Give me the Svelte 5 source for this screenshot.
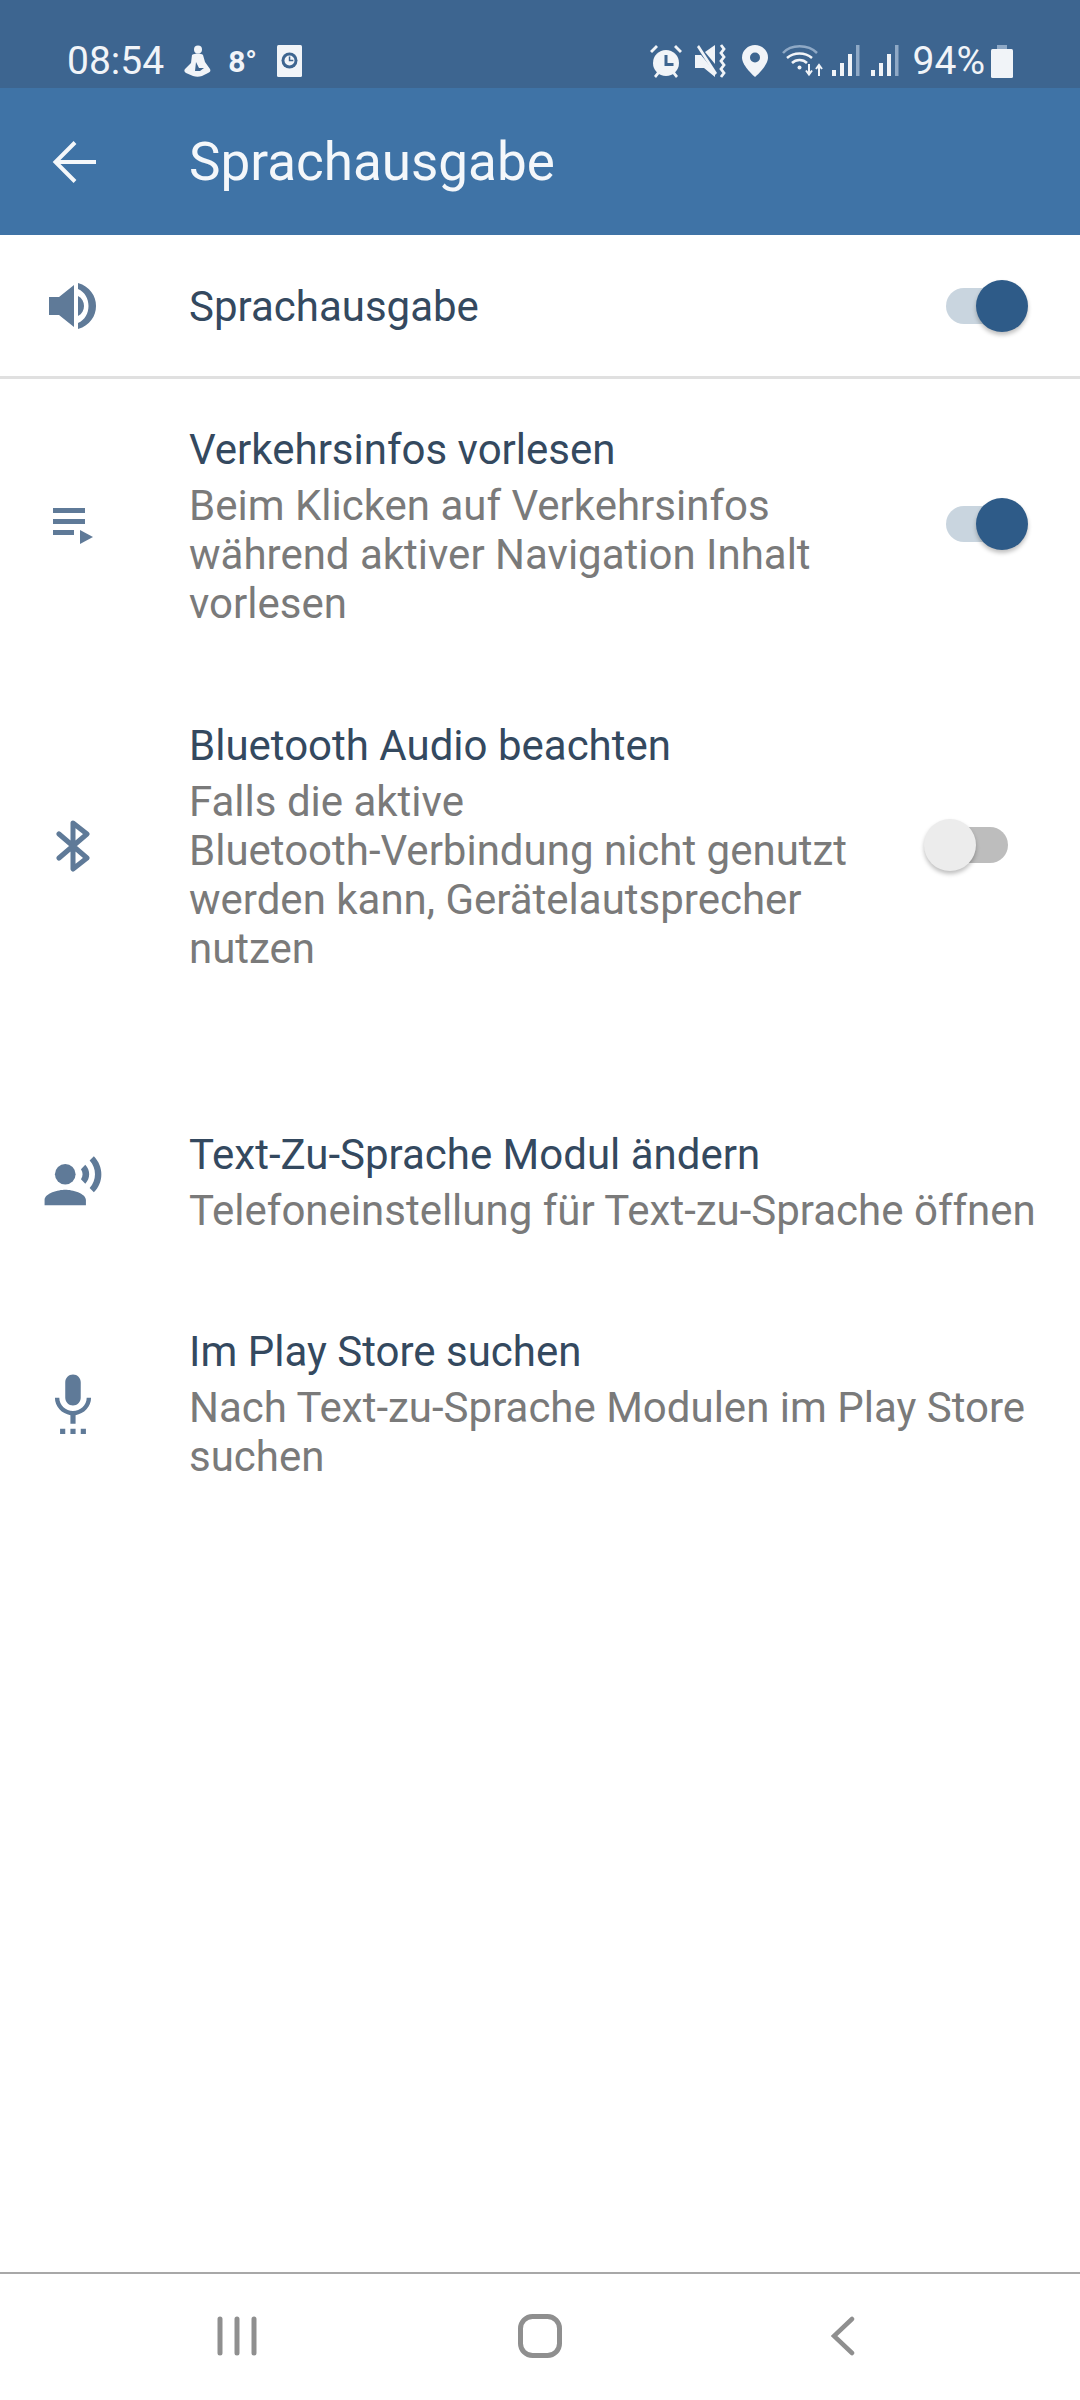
<script>
  const rows = [
    {
      id: 'traffic',
      title: 'Verkehrsinfos vorlesen',
      lines: ['Beim Klicken auf Verkehrsinfos', 'während aktiver Navigation Inhalt', 'vorlesen'],
      toggle: true
    },
    {
      id: 'bluetooth',
      title: 'Bluetooth Audio beachten',
      lines: ['Falls die aktive', 'Bluetooth-Verbindung nicht genutzt', 'werden kann, Gerätelautsprecher', 'nutzen'],
      toggle: false
    },
    {
      id: 'tts',
      title: 'Text-Zu-Sprache Modul ändern',
      lines: ['Telefoneinstellung für Text-zu-Sprache öffnen']
    },
    {
      id: 'store',
      title: 'Im Play Store suchen',
      lines: ['Nach Text-zu-Sprache Modulen im Play Store', 'suchen']
    }
  ];
</script>

<div class="screen">
  <div class="status">
    <div class="status-left">
      <span class="time">08:54</span>
      <svg class="st-figure" viewBox="0 0 27 32" fill="#f1f4f8">
        <circle cx="14" cy="4.500" r="4" />
        <path d="M8 10c3-2 9-2 11 0l2 7 5 7c1 2 0 3-2 4l-6 3c-3 1-6 1-9 0l-7-3c-2-1-2-3-1-4l6-6z" />
        <path d="M12 17l3 6 5 0-4 3h-5z" fill="#3d6590" />
      </svg>
      <span class="deg">8°</span>
      <svg class="st-card" viewBox="0 0 25 32">
        <rect width="25" height="32" rx="1.500" fill="#f1f4f8" />
        <circle cx="12.500" cy="15.500" r="8" fill="#3d6590" />
        <circle cx="12.500" cy="15.500" r="5" fill="#f1f4f8" />
        <path d="M11.800 11.500h1.500v3.200h3v1.500h-4.500z" fill="#3d6590" />
      </svg>
    </div>
    <div class="status-right">
      <svg class="st-alarm" viewBox="0 0 34 34" fill="#f1f4f8">
        <path d="M17 6a13 13 0 1 0 0 26 13 13 0 0 0 0-26z" />
        <path d="M1 7l6-6 2 2-6 6zM33 7l-6-6-2 2 6 6z" />
        <path d="M5 32l4-5 2 2-4 5zM29 32l-4-5-2 2 4 5z" />
        <path d="M15.500 11h3v8h6v3h-9z" fill="#3d6590" />
      </svg>
      <svg class="st-mute" viewBox="0 0 32 34" fill="#f1f4f8">
        <path d="M0 11h6l14 17v5L9 24H0z" />
        <path d="M10 8l10-7v19z" />
        <path d="M2 3l2-2 18 28-2 2z" />
        <path d="M26 1l3 4-3 4 3 4-3 4 3 4-3 4 3 4-3 4" fill="none" stroke="#f1f4f8" stroke-width="2.800" />
      </svg>
      <svg class="st-pin" viewBox="0 0 26 32">
        <path d="M13 0C6 0 0 5.500 0 12.500 0 21 13 32 13 32s13-11 13-19.500C26 5.500 20 0 13 0z" fill="#f1f4f8" />
        <circle cx="13" cy="12.500" r="5" fill="#3d6590" />
      </svg>
      <svg class="st-wifi" viewBox="0 0 42 34" fill="none" stroke="#f1f4f8" stroke-width="2.500">
        <path d="M1 9C9 0 26 0 35 9" stroke="#8fa9c6" />
        <path d="M5 14c7-6 18-6 25 0" />
        <path d="M10 19c4-4 11-4 15 0" />
        <circle cx="17.500" cy="23.500" r="2" fill="#f1f4f8" stroke="none" />
        <path d="M27 20v10M24 26.500l3 4 3-4M37 32V22M34 25l3-4 3 4" stroke-width="2" />
      </svg>
      <svg class="st-signal" viewBox="0 0 28 32" fill="#f1f4f8">
        <rect x="0" y="25" width="4" height="6" />
        <rect x="8" y="18" width="4" height="13" />
        <rect x="16" y="9" width="4" height="22" />
        <rect x="24" y="0" width="3.500" height="31" fill="#8fa9c6" />
      </svg>
      <svg class="st-signal second" viewBox="0 0 28 32" fill="#f1f4f8">
        <rect x="0" y="25" width="4" height="6" />
        <rect x="8" y="18" width="4" height="13" />
        <rect x="16" y="9" width="4" height="22" />
        <rect x="24" y="0" width="3.500" height="31" fill="#8fa9c6" />
      </svg>
      <span class="pct">94%</span>
      <svg class="st-battery" viewBox="0 0 22 33">
        <rect x="6" y="0" width="10" height="4" fill="#8fa9c6" />
        <rect x="0" y="4" width="22" height="29" rx="1.500" fill="#f1f4f8" />
      </svg>
    </div>
  </div>

  <header class="appbar">
    <svg class="back" viewBox="0 0 44 44" fill="none" stroke="#f4f7fa" stroke-width="4">
      <path d="M44 22H4M23 2.500L3.500 22 23 41.500" />
    </svg>
    <h1>Sprachausgabe</h1>
  </header>

  <section class="master">
    <div class="icon-col">
      <svg class="ic-volume" viewBox="0 0 48 48" fill="#5f7a98">
        <path d="M0 15h10L25 3v42L10 33H0z" />
        <path d="M29 14C37 18 37 30 29 34z" />
        <path d="M29 1C53 8 53 40 29 47v-6C43 35 43 13 29 7z" />
      </svg>
    </div>
    <span class="title">Sprachausgabe</span>
    <div class="switch on"><span class="track"></span><span class="thumb"></span></div>
  </section>

  <div class="list">
    {#each rows as row}
      <div class="row {row.id}">
        <div class="icon-col">
          {#if row.id === 'traffic'}
            <svg class="ic-playlist" viewBox="0 0 40 36" fill="#5f7a98">
              <rect x="0" y="0" width="32" height="5" />
              <rect x="0" y="11" width="32" height="5" />
              <rect x="0" y="22" width="21" height="5" />
              <path d="M27 22l13 7-13 7z" />
            </svg>
          {:else if row.id === 'bluetooth'}
            <svg class="ic-bluetooth" viewBox="0 0 34 52" fill="none" stroke="#5f7a98" stroke-width="5" stroke-linecap="round" stroke-linejoin="round">
              <path d="M3 14l28 24-14 11V3l14 11L3 38" />
            </svg>
          {:else if row.id === 'tts'}
            <svg class="ic-voice" viewBox="0 0 24 24" fill="#5f7a98">
              <circle cx="9" cy="9" r="4" />
              <path d="M9 15c-2.670 0-8 1.340-8 4v2h16v-2c0-2.660-5.330-4-8-4zm7.760-9.640l-1.680 1.690c.840 1.180.840 2.710 0 3.890l1.680 1.690c2.020-2.020 2.020-5.070 0-7.270zM20.070 2l-1.630 1.630c2.770 3.020 2.770 7.560 0 10.740L20.070 16c3.900-3.890 3.910-9.950 0-14z" />
            </svg>
          {:else}
            <svg class="ic-mic" viewBox="0 0 24 24" fill="#5f7a98">
              <path d="M7 24h2v-2H7v2zm5-11c1.660 0 2.990-1.340 2.990-3L15 4c0-1.660-1.340-3-3-3S9 2.340 9 4v6c0 1.660 1.340 3 3 3zm-1 11h2v-2h-2v2zm4 0h2v-2h-2v2zm4-14h-1.700c0 3-2.540 5.100-5.300 5.100S6.700 13 6.700 10H5c0 3.410 2.720 6.230 6 6.720V20h2v-3.280c3.280-.490 6-3.310 6-6.720z" />
            </svg>
          {/if}
        </div>
        <div class="text">
          <span class="title">{row.title}</span>
          <p>
            {#each row.lines as line, i}{#if i > 0}<br />{/if}{line}{/each}
          </p>
        </div>
        {#if row.toggle !== undefined}
          <div class="switch" class:on={row.toggle}><span class="track"></span><span class="thumb"></span></div>
        {/if}
      </div>
    {/each}
  </div>

  <nav class="navbar">
    <svg class="nav-recent" viewBox="0 0 40 40" fill="none" stroke="#8f8f8f" stroke-width="5" stroke-linecap="round">
      <path d="M3 3v34M20 3v34M37 3v34" />
    </svg>
    <svg class="nav-home" viewBox="0 0 44 44" fill="none" stroke="#8f8f8f" stroke-width="5">
      <rect x="2.500" y="2.500" width="39" height="39" rx="12" />
    </svg>
    <svg class="nav-back" viewBox="0 0 24 40" fill="none" stroke="#8f8f8f" stroke-width="4.500" stroke-linecap="round">
      <path d="M21 3L3 20l18 17" />
    </svg>
  </nav>
</div>

<style>
  :global(body) {
    margin: 0;
    background: #fff;
  }

  .screen {
    width: 1080px;
    height: 2400px;
    display: flex;
    flex-direction: column;
    font-family: Roboto, "Liberation Sans", sans-serif;
    overflow: hidden;
  }

  .status {
    height: 88px;
    flex: none;
    background: #3d6590;
    color: #f1f4f8;
    display: flex;
    justify-content: space-between;
    align-items: flex-end;
    box-sizing: border-box;
    padding: 0 67px 7px 67px;
  }

  .status-left,
  .status-right {
    display: flex;
    align-items: center;
    height: 40px;
  }

  .time {
    font-size: 39px;
    line-height: 40px;
  }

  .st-figure {
    width: 27px;
    height: 32px;
    margin-left: 20px;
  }

  .deg {
    font-size: 30px;
    font-weight: 700;
    margin-left: 17px;
  }

  .st-card {
    width: 25px;
    height: 32px;
    margin-left: 20px;
  }

  .st-alarm {
    width: 34px;
    height: 34px;
  }

  .st-mute {
    width: 32px;
    height: 34px;
    margin-left: 12px;
  }

  .st-pin {
    width: 26px;
    height: 32px;
    margin-left: 15px;
  }

  .st-wifi {
    width: 42px;
    height: 34px;
    margin-left: 14px;
  }

  .st-signal {
    width: 28px;
    height: 32px;
    margin-left: 8px;
  }

  .st-signal.second {
    margin-left: 11px;
  }

  .pct {
    font-size: 39px;
    line-height: 40px;
    margin-left: 14px;
  }

  .st-battery {
    width: 22px;
    height: 33px;
    margin-left: 6px;
  }

  .appbar {
    height: 147px;
    flex: none;
    background: #3f73a6;
    display: flex;
    align-items: center;
    box-sizing: border-box;
    padding-left: 52px;
  }

  .back {
    width: 44px;
    height: 44px;
    margin-right: 93px;
  }

  h1 {
    margin: 0;
    font-size: 53px;
    font-weight: 400;
    color: #f4f7fa;
  }

  .master {
    height: 141px;
    flex: none;
    display: flex;
    align-items: center;
    border-bottom: 3px solid #e0e0e0;
  }

  .icon-col {
    width: 189px;
    flex: none;
    display: flex;
    justify-content: center;
    padding-right: 43px;
    box-sizing: border-box;
  }

  .title {
    font-size: 42px;
    line-height: 49px;
    color: #34495f;
    display: block;
  }

  .master .title {
    flex: 1;
    padding-top: 2px;
  }

  .row {
    display: flex;
    align-items: center;
    padding: 46px 0 47px;
  }

  .row.bluetooth {
    padding-bottom: 111px;
  }

  .row.store {
    padding-top: 45px;
  }

  .row .icon-col {
    margin-bottom: 2px;
  }

  .text {
    flex: 1;
    min-width: 0;
  }

  .text p {
    margin: 7px 0 0;
    font-size: 42px;
    line-height: 49px;
    color: #7a7a7a;
    white-space: nowrap;
  }

  .switch {
    width: 104px;
    height: 52px;
    flex: none;
    margin-right: 52px;
    position: relative;
  }

  .row .switch {
    margin-bottom: 5px;
  }

  .track {
    position: absolute;
    left: 22px;
    top: 8px;
    width: 62px;
    height: 36px;
    border-radius: 18px;
    background: #bdbdbd;
  }

  .on .track {
    background: #c9d5df;
  }

  .thumb {
    position: absolute;
    left: 0;
    top: 0;
    width: 52px;
    height: 52px;
    border-radius: 50%;
    background: #ececec;
    box-shadow: 0 3px 4px rgba(0, 0, 0, 0.25);
  }

  .on .thumb {
    left: 52px;
    background: #2e5b88;
  }

  .ic-volume {
    width: 48px;
    height: 48px;
  }

  .ic-playlist {
    width: 40px;
    height: 36px;
  }

  .ic-bluetooth {
    width: 34px;
    height: 52px;
  }

  .ic-voice {
    width: 62px;
    height: 62px;
  }

  .ic-mic {
    width: 62px;
    height: 62px;
  }

  .navbar {
    margin-top: auto;
    height: 128px;
    flex: none;
    box-sizing: border-box;
    border-top: 2px solid #a8a8a8;
    display: flex;
    align-items: center;
    justify-content: space-between;
    padding: 0 225px 3px 217px;
  }

  .nav-recent {
    width: 40px;
    height: 40px;
  }

  .nav-home {
    width: 44px;
    height: 44px;
    margin-right: 8px;
  }

  .nav-back {
    width: 24px;
    height: 40px;
  }
</style>
